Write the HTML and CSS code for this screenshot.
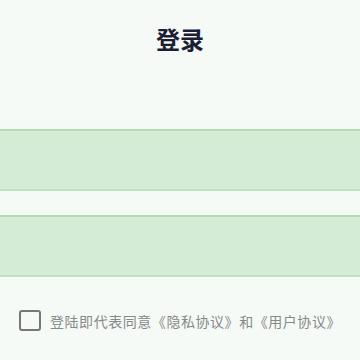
FILE: index.html
```html
<!DOCTYPE html>
<html lang="zh-CN">
<head>
    <meta charset="UTF-8">
    <title>登录</title>
    <link rel="stylesheet" href="styles.css">
</head>
<body>
    <div class="page">
        <h2 class="title">登录</h2>
        <form class="login-form">
            <input class="field" type="text" name="phone">
            <input class="field" type="password" name="code">
            <label class="agree">
                <span class="check"></span>
                <span class="agree-text">登陆即代表同意《隐私协议》和《用户协议》</span>
            </label>
        </form>
    </div>
</body>
</html>
```

FILE: styles.css
```css
html, body {
    margin: 0;
    padding: 0;
    background-color: #f5faf7;
}
body {
    font-family: "Noto Sans CJK SC", "Noto Sans", sans-serif;
}
.page {
    width: 360px;
    height: 360px;
}
.title {
    margin: 0;
    padding-top: 20px;
    height: 38px;
    line-height: 38px;
    text-align: center;
    font-size: 24px;
    font-weight: bold;
    color: #1b1e35;
}
.login-form {
    margin-top: 71px;
    display: flex;
    flex-direction: column;
}
.field {
    display: block;
    width: 100%;
    height: 62px;
    box-sizing: border-box;
    border: none;
    border-top: 2px solid #b2dcb4;
    border-bottom: 2px solid #bfe2c1;
    background-color: #d4ecd6;
    outline: none;
    margin-bottom: 24px;
}
.agree {
    display: flex;
    align-items: center;
    margin-top: 9px;
    padding-left: 19px;
}
.check {
    width: 22px;
    height: 21px;
    box-sizing: border-box;
    border: 2px solid #777;
    border-radius: 3px;
    margin-right: 9px;
}
.agree-text {
    font-size: 14px;
    color: #888;
    letter-spacing: 0.55px;
}
```
